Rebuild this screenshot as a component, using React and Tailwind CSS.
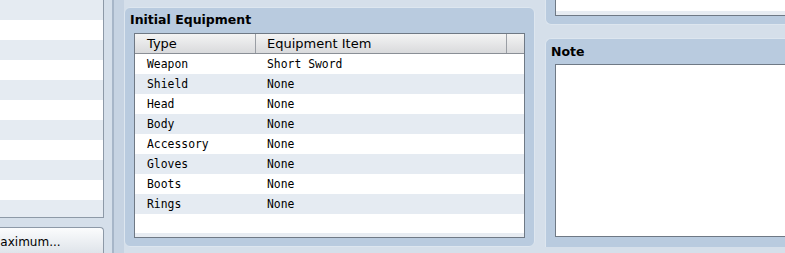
import React from "react";

const leftRows = Array.from({ length: 11 });

const equipment = [
  { type: "Weapon", item: "Short Sword" },
  { type: "Shield", item: "None" },
  { type: "Head", item: "None" },
  { type: "Body", item: "None" },
  { type: "Accessory", item: "None" },
  { type: "Gloves", item: "None" },
  { type: "Boots", item: "None" },
  { type: "Rings", item: "None" },
];

const App = () => {
  return (
    <div className="w-[785px] h-[253px] bg-[#d5dfea] flex overflow-hidden font-['DejaVu_Sans',sans-serif] text-black">
      {/* Left list + button */}
      <div className="w-[112px] shrink-0 flex flex-col">
        <div className="w-[104px] h-[221px] bg-white border-r border-b border-[#8d99a7] flex flex-col overflow-hidden">
          {leftRows.map((_, i) => (
            <div
              key={i}
              className={`h-[20px] shrink-0 ${i % 2 === 0 ? "bg-[#e5ebf2]" : "bg-white"}`}
            />
          ))}
        </div>
        <div className="mt-[9px] w-[104px] h-[26px] rounded-tr-[4px] border-t border-r border-[#8d99a7] bg-gradient-to-b from-[#fbfcfd] to-[#dfe4ea] overflow-hidden">
          <div className="-ml-[10px] pt-[6px] text-[12px] leading-[16px] whitespace-nowrap">
            Maximum...
          </div>
        </div>
      </div>

      {/* Splitter */}
      <div className="w-[2px] shrink-0 bg-[#a7b6c8]" />
      <div className="w-[10px] shrink-0 bg-[#c6d3e2]" />

      {/* Initial Equipment group */}
      <div className="w-[411px] shrink-0 pt-[7px] pb-[6px]">
        <div className="h-full rounded-[6px] border border-[#dde6ef] bg-[#b9cbdf] flex flex-col px-[9px] pb-[8px]">
          <div className="h-[25px] -ml-[4px] pt-[3px] text-[12.5px] leading-[18px] font-bold whitespace-nowrap">
            Initial Equipment
          </div>
          <div className="flex-1 bg-white border border-[#6f7985] flex flex-col overflow-hidden">
            <div className="h-[20px] shrink-0 flex border-b border-[#8a8f96] bg-gradient-to-b from-[#f4f4f4] to-[#d9dadc] text-[13px] leading-[18px]">
              <div className="w-[121px] pl-[12px] border-r border-[#9a9ea4] pt-[1px]">Type</div>
              <div className="w-[251px] pl-[11px] border-r border-[#9a9ea4] pt-[1px]">Equipment Item</div>
              <div className="flex-1" />
            </div>
            <div className="flex-1 flex flex-col font-['DejaVu_Sans_Mono',monospace] text-[11.4px] leading-[19px]">
              {equipment.map((row, i) => (
                <div
                  key={row.type}
                  className={`h-[20px] shrink-0 flex pt-[1px] ${i % 2 === 0 ? "bg-white" : "bg-[#e5ebf2]"}`}
                >
                  <div className="w-[121px] pl-[12px]">{row.type}</div>
                  <div className="pl-[11px]">{row.item}</div>
                </div>
              ))}
              <div className="flex-1" />
              <div className="h-[4px] shrink-0 bg-[#e7ecf2]" />
            </div>
          </div>
        </div>
      </div>

      {/* Gap */}
      <div className="w-[10px] shrink-0" />

      {/* Right column */}
      <div className="flex-1 flex flex-col pb-[6px]">
        <div className="h-[25px] shrink-0 rounded-bl-[6px] border-l border-b border-[#dde6ef] bg-[#b9cbdf] pl-[9px] pb-[8px]">
          <div className="h-full bg-white border-l border-b border-[#6f7985] flex flex-col">
            <div className="flex-1" />
            <div className="h-[4px] bg-[#e7ecf2]" />
          </div>
        </div>
        <div className="h-[13px] shrink-0" />
        <div className="flex-1 rounded-tl-[6px] border-l border-t border-[#dde6ef] bg-[#b9cbdf] flex flex-col pl-[9px] pb-[10px]">
          <div className="h-[25px] -ml-[4px] pt-[4px] text-[12.5px] leading-[18px] font-bold">Note</div>
          <div className="flex-1 bg-white border-l border-t border-b border-[#6f7985]" />
        </div>
      </div>
    </div>
  );
};

export default App;
